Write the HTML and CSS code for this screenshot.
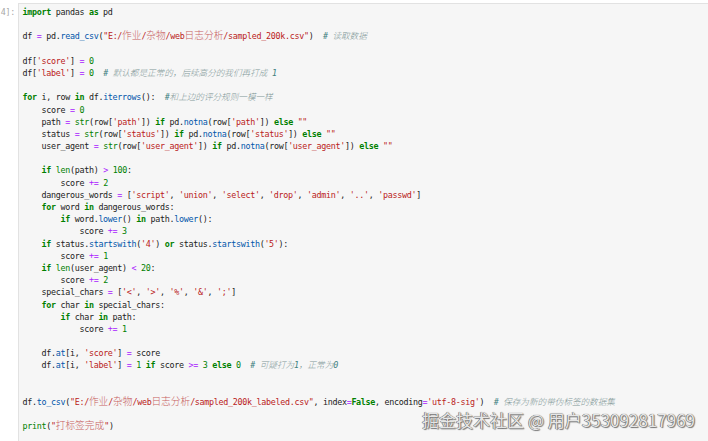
FILE: index.html
```html
<!DOCTYPE html>
<html lang="zh">
<head>
<meta charset="utf-8">
<link rel="stylesheet" href="styles.css">
</head>
<body>
<div class="page">
  <div class="prompt"><span>[4]:</span></div>
  <div class="cell">
<pre class="code"><span class="kw">import</span> pandas <span class="kw">as</span> pd

df <span class="op">=</span> pd.<span class="pr">read_csv</span>(<span class="st">"E:/<span class="cj">作业</span>/<span class="cj">杂物</span>/web<span class="cj">日志分析</span>/sampled_200k.csv"</span>)  <span class="cm"># <span class="cc">读取数据</span></span>

df[<span class="st">'score'</span>] <span class="op">=</span> <span class="nu">0</span>
df[<span class="st">'label'</span>] <span class="op">=</span> <span class="nu">0</span>  <span class="cm"># <span class="cc">默认都是正常的，后续高分的我们再打成</span> 1</span>

<span class="kw">for</span> i, row <span class="kw">in</span> df.<span class="pr">iterrows</span>():  <span class="cm">#<span class="cc">和上边的评分规则一模一样</span></span>
    score <span class="op">=</span> <span class="nu">0</span>
    path <span class="op">=</span> <span class="bi">str</span>(row[<span class="st">'path'</span>]) <span class="kw">if</span> pd.<span class="pr">notna</span>(row[<span class="st">'path'</span>]) <span class="kw">else</span> <span class="st">""</span>
    status <span class="op">=</span> <span class="bi">str</span>(row[<span class="st">'status'</span>]) <span class="kw">if</span> pd.<span class="pr">notna</span>(row[<span class="st">'status'</span>]) <span class="kw">else</span> <span class="st">""</span>
    user_agent <span class="op">=</span> <span class="bi">str</span>(row[<span class="st">'user_agent'</span>]) <span class="kw">if</span> pd.<span class="pr">notna</span>(row[<span class="st">'user_agent'</span>]) <span class="kw">else</span> <span class="st">""</span>

    <span class="kw">if</span> <span class="bi">len</span>(path) <span class="op">&gt;</span> <span class="nu">100</span>:
        score <span class="op">+=</span> <span class="nu">2</span>
    dangerous_words <span class="op">=</span> [<span class="st">'script'</span>, <span class="st">'union'</span>, <span class="st">'select'</span>, <span class="st">'drop'</span>, <span class="st">'admin'</span>, <span class="st">'..'</span>, <span class="st">'passwd'</span>]
    <span class="kw">for</span> word <span class="kw">in</span> dangerous_words:
        <span class="kw">if</span> word.<span class="pr">lower</span>() <span class="kw">in</span> path.<span class="pr">lower</span>():
            score <span class="op">+=</span> <span class="nu">3</span>
    <span class="kw">if</span> status.<span class="pr">startswith</span>(<span class="st">'4'</span>) <span class="kw">or</span> status.<span class="pr">startswith</span>(<span class="st">'5'</span>):
        score <span class="op">+=</span> <span class="nu">1</span>
    <span class="kw">if</span> <span class="bi">len</span>(user_agent) <span class="op">&lt;</span> <span class="nu">20</span>:
        score <span class="op">+=</span> <span class="nu">2</span>
    special_chars <span class="op">=</span> [<span class="st">'&lt;'</span>, <span class="st">'&gt;'</span>, <span class="st">'%'</span>, <span class="st">'&amp;'</span>, <span class="st">';'</span>]
    <span class="kw">for</span> char <span class="kw">in</span> special_chars:
        <span class="kw">if</span> char <span class="kw">in</span> path:
            score <span class="op">+=</span> <span class="nu">1</span>

    df.<span class="pr">at</span>[i, <span class="st">'score'</span>] <span class="op">=</span> score
    df.<span class="pr">at</span>[i, <span class="st">'label'</span>] <span class="op">=</span> <span class="nu">1</span> <span class="kw">if</span> score <span class="op">&gt;=</span> <span class="nu">3</span> <span class="kw">else</span> <span class="nu">0</span>  <span class="cm"># <span class="cc">可疑打为</span>1<span class="cc">，正常为</span>0</span>


df.<span class="pr">to_csv</span>(<span class="st">"E:/<span class="cj">作业</span>/<span class="cj">杂物</span>/web<span class="cj">日志分析</span>/sampled_200k_labeled.csv"</span>, index<span class="op">=</span><span class="kw">False</span>, encoding<span class="op">=</span><span class="st">'utf-8-sig'</span>)  <span class="cm"># <span class="cc">保存为新的带伪标签的数据集</span></span>

<span class="bi">print</span>(<span class="st">"<span class="cj">打标签完成</span>"</span>)</pre>
  </div>
  <div class="watermark">掘金技术社区 @ 用户353092817969</div>
</div>
</body>
</html>
```
FILE: styles.css
```css
html, body {
  margin: 0;
  padding: 0;
  background: #ffffff;
}

.page {
  position: relative;
  width: 708px;
  height: 441px;
  overflow: hidden;
  display: flex;
  align-items: flex-start;
}

.prompt {
  width: 18px;
  flex: 0 0 18px;
  display: flex;
  justify-content: flex-end;
  overflow: hidden;
  padding-top: 6px;
  padding-right: 3px;
  box-sizing: border-box;
  font-family: "DejaVu Sans Mono", monospace;
  font-size: 8.4px;
  letter-spacing: -0.3px;
  line-height: 12.18px;
  color: #a8a8a8;
  white-space: nowrap;
}

.cell {
  flex: 1;
  margin-top: 3px;
  height: 460px;
  background: #f6f6f6;
  border-top: 1px solid #e2e2e2;
  border-left: 1px solid #e2e2e2;
  padding: 2px 0 0 3.5px;
}

.code {
  margin: 0;
  font-family: "DejaVu Sans Mono", monospace;
  font-size: 8.4px;
  letter-spacing: -0.3px;
  line-height: 12.18px;
  color: #222222;
  white-space: pre;
}

.kw {
  color: #008000;
  font-weight: bold;
}

.bi {
  color: #008000;
}

.op {
  color: #aa22ff;
}

.nu {
  color: #008000;
}

.st {
  color: #ba2121;
}

.pr {
  color: #0055aa;
}

.cm {
  color: #408080;
  font-style: italic;
}

.cj {
  font-family: "Noto Sans CJK SC", sans-serif;
  font-size: 9.7px;
  line-height: 0;
  letter-spacing: 0;
  color: #c76060;
  font-weight: 300;
}

.cc {
  font-family: "Noto Sans CJK SC", sans-serif;
  font-size: 8.6px;
  line-height: 0;
  letter-spacing: 0;
  color: #7f9797;
  font-weight: 300;
}

.watermark {
  position: absolute;
  right: 13px;
  bottom: 10px;
  font-family: "Noto Sans CJK SC", sans-serif;
  font-size: 17px;
  line-height: 22px;
  color: #e6e6e6;
  white-space: nowrap;
  text-shadow: 0 0 1px #555, 1px 1px 1px #777, -0.5px -0.5px 0.5px #666;
}
```
